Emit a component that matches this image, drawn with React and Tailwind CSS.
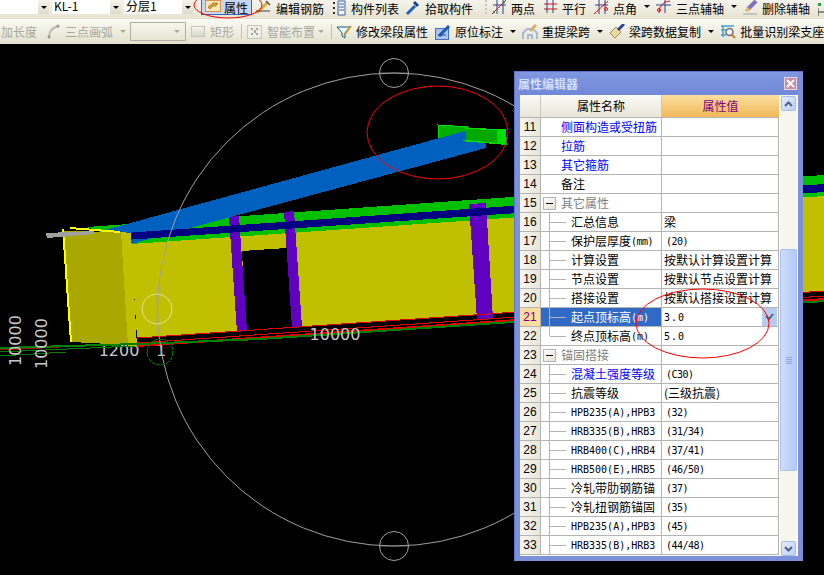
const cjk = { fontFamily: '"Noto Sans CJK SC", "Liberation Sans", sans-serif' };

const Arrow = ({ className = "", color = "border-t-black" }) => (
  <span className={`w-0 h-0 border-x-[3px] border-x-transparent border-t-[3px] shrink-0 ${color} ${className}`} />
);

const Ico = ({ w = 16, children }) => (
  <svg width={w} height="16" viewBox={`0 0 ${w} 16`} className="shrink-0">
    {children}
  </svg>
);

const Tool = ({ icon, label, className = "", gap = "gap-[4px]", muted }) => (
  <div className={`flex items-center shrink-0 whitespace-nowrap ${gap} ${className} ${muted ? "text-[#a8a89c]" : "text-black"}`}>
    {icon}
    <span>{label}</span>
  </div>
);

const Pencil = () => (
  <Ico w={15}>
    <path d="M1 13 L12 2" stroke="#d8b040" strokeWidth="3" />
    <path d="M10 1 L14 5" stroke="#505050" strokeWidth="1.5" />
    <path d="M0 11 H14" stroke="#404040" strokeWidth="1" />
  </Ico>
);
const ListIcon = () => (
  <Ico w={14}>
    <path d="M6 1 H13 V15 H6 Z" fill="#f4f8ff" stroke="#3c5c9c" />
    <path d="M7 4 H12 M7 7 H12 M7 10 H12" stroke="#3c5c9c" />
    <path d="M1 3 H3 M1 8 H3 M1 13 H3" stroke="#303030" strokeWidth="2" />
  </Ico>
);
const Picker = () => (
  <Ico w={14}>
    <path d="M1 14 L9 6" stroke="#2060c0" strokeWidth="3" />
    <path d="M8 2 L12 6" stroke="#104090" strokeWidth="3" />
  </Ico>
);
const Axis = ({ children }) => (
  <Ico w={15}>
    <path d="M1 5 H14 M5 0 V14 M11 0 V14" stroke="#30408c" />
    {children}
  </Ico>
);
const TwoPoint = () => (
  <Axis>
    <path d="M0 14 L14 0" stroke="#e01010" />
    <circle cx="2" cy="12" r="1" fill="#208020" />
    <circle cx="12" cy="2" r="1" fill="#208020" />
  </Axis>
);
const Parallel = () => (
  <Ico w={15}>
    <path d="M1 4 H14 M1 9 H14" stroke="#e01010" />
    <path d="M4 0 V13 M10 0 V13" stroke="#30408c" />
  </Ico>
);
const Angle = () => (
  <Axis>
    <path d="M0 14 L14 1" stroke="#e01010" />
    <circle cx="12" cy="9" r="1.5" fill="none" stroke="#e01010" />
  </Axis>
);
const Arc3 = () => (
  <Ico>
    <path d="M3 13 A11 11 0 0 1 14 1" stroke="#e01010" fill="none" />
    <path d="M0 5 H15 M9 0 V13" stroke="#30408c" />
    <circle cx="3" cy="10" r="1.5" fill="none" stroke="#e01010" />
  </Ico>
);
const Eraser = () => (
  <Ico w={15}>
    <path d="M5 9 L13 1" stroke="#8070c0" strokeWidth="4" />
    <path d="M3 11 L6 8" stroke="#e8b050" strokeWidth="3" />
    <path d="M0 14 H14" stroke="#a0a0a0" />
  </Ico>
);
const Prop = () => (
  <Ico>
    <rect x="0.5" y="1.5" width="15" height="11" fill="#fbe6b4" stroke="#d89048" />
    <path d="M3 8 L8 4 H13 L11 7 H8 L5 10 Z" fill="#d8a030" stroke="#705020" strokeWidth="0.5" />
  </Ico>
);
const ArcTool = () => (
  <Ico w={13}>
    <path d="M2 14 C2 7 6 3 12 2" stroke="#b8b8b0" strokeWidth="2" fill="none" />
    <circle cx="2" cy="13" r="1.5" fill="#989890" />
    <circle cx="11" cy="2" r="1.5" fill="#989890" />
  </Ico>
);
const Rect = () => (
  <span className="w-[14px] h-[11px] shrink-0 border border-[#c4c4b8] bg-gradient-to-b from-[#f4f4ee] to-[#d8d8cc]" />
);
const Smart = () => (
  <Ico w={15}>
    <rect x="0.5" y="1.5" width="14" height="13" fill="#eeeee4" stroke="#b4b4a8" strokeDasharray="2 1" />
    <path d="M4 5 h2 M9 5 h2 M4 10 h2 M9 10 h2 M7 7 h1 v2" stroke="#909088" strokeWidth="1.5" />
  </Ico>
);
const Funnel = () => (
  <Ico>
    <path d="M1 3 H14 L9 9 V14 L6 12 V9 Z" fill="#e8f8f8" stroke="#106080" />
    <path d="M8 11 L15 2" stroke="#c89030" strokeWidth="2" />
  </Ico>
);
const Mark = () => (
  <Ico>
    <rect x="0.5" y="4.5" width="13" height="11" fill="#a8c4ec" stroke="#4070c0" />
    <path d="M4 12 L14 2" stroke="#2058b8" strokeWidth="3" />
    <path d="M3 11 H11" stroke="#204890" />
  </Ico>
);
const Refetch = () => (
  <Ico>
    <path d="M1 15 V9 L5 5 H11 L15 9 V15" fill="none" stroke="#a8b8d8" strokeWidth="2" />
    <path d="M6 15 V11 H10 V15" fill="none" stroke="#a8b8d8" strokeWidth="2" />
    <path d="M8 7 L14 1" stroke="#d8b070" strokeWidth="3" />
  </Ico>
);
const Brush = () => (
  <Ico>
    <path d="M1 9 L7 3 L12 8 L6 14 Z" fill="#e8dca0" stroke="#a09050" />
    <path d="M9 6 L15 0" stroke="#3040a0" strokeWidth="3" />
  </Ico>
);
const Batch = () => (
  <Ico>
    <path d="M1 2 H14 M1 6 H8 M3 2 V13 M1 11 H6" stroke="#40a0d8" strokeWidth="1.5" fill="none" />
    <circle cx="9.5" cy="8" r="3.5" fill="#f0f4f8" stroke="#707070" strokeWidth="1.5" />
    <path d="M12 11 L15 14" stroke="#d87020" strokeWidth="2" />
  </Ico>
);
const Corner = () => (
  <Ico w={7}>
    <rect x="0" y="1" width="3" height="3" fill="#20a040" />
    <path d="M0 6 V14 M0 10 H6" stroke="#303030" />
  </Ico>
);

const Combo = ({ w, text }) => (
  <div className="flex h-[14px] shrink-0">
    <div className={`bg-white pl-[2px] leading-[11px] overflow-hidden ${w}`}>{text}</div>
    <div className="w-[11px] bg-gradient-to-b from-[#f4f3ea] to-[#dedccb] flex items-center justify-center">
      <Arrow />
    </div>
  </div>
);

const Toolbars = () => (
  <div className="shrink-0 text-[12px] leading-[11px]" style={cjk}>
    <div className="h-[19px] flex items-start overflow-hidden bg-gradient-to-b from-[#f5f4ec] to-[#e6e3d2]">
      <Combo w="w-[38px]" />
      <div className="ml-[3px]"><Combo w="w-[58px]" text="KL-1" /></div>
      <div className="ml-[3px]"><Combo w="w-[58px]" text="分层1" /></div>
      <div className="ml-[8px] w-[51px] h-[15px] pl-[3px] flex items-center gap-[3px] border-x border-b border-[#316ac5] bg-[#c8d6ee] shrink-0">
        <Prop />
        <span>属性</span>
      </div>
      <Tool className="ml-[4px]" gap="gap-[5px]" icon={<Pencil />} label="编辑钢筋" />
      <Tool className="ml-[8px]" gap="gap-[5px]" icon={<ListIcon />} label="构件列表" />
      <Tool className="ml-[7px]" gap="gap-[5px]" icon={<Picker />} label="拾取构件" />
      <div className="ml-[12px] w-[2px] h-[14px] shrink-0 border-l-2 border-dotted border-[#c8c4b0]" />
      <Tool className="ml-[5px]" icon={<TwoPoint />} label="两点" />
      <Tool className="ml-[8px]" icon={<Parallel />} label="平行" />
      <Tool className="ml-[8px]" icon={<Angle />} label="点角" />
      <Arrow className="ml-[7px] mt-[5px]" />
      <Tool className="ml-[6px]" icon={<Arc3 />} label="三点辅轴" />
      <Arrow className="ml-[7px] mt-[5px]" />
      <Tool className="ml-[6px]" icon={<Eraser />} label="删除辅轴" />
      <div className="ml-[8px] mt-[2px]"><Corner /></div>
    </div>
    <div className="h-[25px] flex items-center overflow-hidden bg-gradient-to-b from-[#fbfaf4] to-[#e4e1ce] leading-[12px]">
      <span className="ml-[1px] text-[#a8a89c] whitespace-nowrap shrink-0">加长度</span>
      <Tool muted className="ml-[10px]" gap="gap-[5px]" icon={<ArcTool />} label="三点画弧" />
      <Arrow className="ml-[7px]" color="border-t-[#a8a89c]" />
      <div className="ml-[4px] w-[56px] h-[19px] shrink-0 border border-[#b0b0a4] flex items-center justify-end pr-[5px]">
        <Arrow color="border-t-[#a8a89c]" />
      </div>
      <Tool muted className="ml-[5px]" gap="gap-[5px]" icon={<Rect />} label="矩形" />
      <div className="ml-[7px] w-px h-[15px] bg-[#c4c0ac] shrink-0" />
      <Tool muted className="ml-[5px]" gap="gap-[5px]" icon={<Smart />} label="智能布置" />
      <Arrow className="ml-[3px]" color="border-t-[#a8a89c]" />
      <div className="ml-[7px] w-px h-[15px] bg-[#c4c0ac] shrink-0" />
      <Tool className="ml-[4px]" icon={<Funnel />} label="修改梁段属性" />
      <Tool className="ml-[7px]" icon={<Mark />} label="原位标注" />
      <Arrow className="ml-[7px]" />
      <Tool className="ml-[6px]" icon={<Refetch />} label="重提梁跨" />
      <Arrow className="ml-[7px]" />
      <Tool className="ml-[6px]" icon={<Brush />} label="梁跨数据复制" />
      <Arrow className="ml-[7px]" />
      <Tool className="ml-[6px]" icon={<Batch />} label="批量识别梁支座" />
    </div>
  </div>
);

const Scene = () => (
  <svg className="block w-full h-full" viewBox="0 44 824 531" shapeRendering="crispEdges">
    {/* green band + beam end */}
    <polygon points="87,227 824,175 824,196 131,244" fill="#00c000" />
    <polygon points="438,125 468,127 468,132 439,140" fill="#00b000" stroke="#00e000" />
    <polygon points="105,230 465,131 486,144 486,148 131,244" fill="#0060c0" />
    <polygon points="466,128 506,129 507,145 460,141 466,140" fill="#00e000" />
    <polygon points="466,129 497,130 497,143 466,140" fill="#00a800" />
    {/* wall */}
    <polygon points="131,244 824,196 824,291 137,338" fill="#c0c000" />
    <polygon points="242,251 287,248 292,328 246,332" fill="#000000" />
    <polygon points="229,217 239,216 247,331 237,332" fill="#6000c0" />
    <polygon points="284,212 294,211 302,327 292,328" fill="#6000c0" />
    <polygon points="469,204 486,203 493,319 477,320" fill="#6000c0" />
    <polygon points="125,233 824,184 824,192 125,240" fill="#000080" />
    <g fill="#c8c8c8" fontFamily='"DejaVu Sans", sans-serif' fontSize="16" shapeRendering="auto">
      <text x="119" y="356" textAnchor="middle">1200</text>
      <text x="161" y="356" textAnchor="middle">1</text>
    </g>
    {/* end block */}
    <polygon points="64,231 121,232 128,345 72,342" fill="#a8a800" />
    <polygon points="121,232 131,233 137,347 128,346" fill="#c0c000" />
    <path d="M63 229 L71 342" stroke="#ffff00" strokeWidth="2" fill="none" />
    <path d="M70 228 L120 232" stroke="#ffff00" strokeWidth="2" fill="none" />
    <polygon points="46,233 94,231 94,234 47,238" fill="#a0a0a0" />
    {/* ground lines */}
    <g fill="none" strokeWidth="1">
      <path d="M137 338 L824 291" stroke="#e00000" />
      <path d="M137 343 L824 296" stroke="#e00000" />
      <path d="M137 346 L824 299" stroke="#e00000" strokeWidth="2" />
      <path d="M0 350 L100 345" stroke="#a01010" />
      <path d="M0 348 L137 344 L260 339 L824 301" stroke="#008000" strokeWidth="2" />
      <path d="M0 352 L135 346" stroke="#008000" />
      <path d="M0 356 L66 352" stroke="#008000" />
    </g>
    {/* axis circles */}
    <g fill="none" stroke="#a0a0a0" shapeRendering="auto">
      <circle cx="394" cy="309.5" r="236.5" />
      <circle cx="394" cy="73" r="14.5" />
      <circle cx="394" cy="546" r="14.5" />
      <circle cx="157" cy="309" r="15" stroke="#e0e0a0" />
      <path d="M379 73 H408 M379 546 H408 M157 294 V324" strokeWidth="0.6" />
    </g>
    <circle cx="160" cy="352" r="13" fill="none" stroke="#007000" strokeDasharray="4 1" />
    <g fill="#c8c8c8" fontFamily='"DejaVu Sans", sans-serif' fontSize="16" shapeRendering="auto">
      <text x="335" y="340" textAnchor="middle">10000</text>
      <text transform="translate(21 366) rotate(-90)">10000</text>
      <text transform="translate(47 369) rotate(-90)">10000</text>
    </g>
  </svg>
);

const rows = [
  { n: 11, name: "侧面构造或受扭筋", blue: true },
  { n: 12, name: "拉筋", blue: true },
  { n: 13, name: "其它箍筋", blue: true },
  { n: 14, name: "备注" },
  { n: 15, name: "其它属性", group: true },
  { n: 16, name: "汇总信息", child: true, value: "梁" },
  { n: 17, name: "保护层厚度", unit: "(mm)", child: true, value: "(20)" },
  { n: 18, name: "计算设置", child: true, value: "按默认计算设置计算" },
  { n: 19, name: "节点设置", child: true, value: "按默认节点设置计算" },
  { n: 20, name: "搭接设置", child: true, value: "按默认搭接设置计算" },
  { n: 21, name: "起点顶标高", unit: "(m)", child: true, value: "3.0", active: true },
  { n: 22, name: "终点顶标高", unit: "(m)", child: true, value: "5.0", last: true },
  { n: 23, name: "锚固搭接", group: true },
  { n: 24, name: "混凝土强度等级", child: true, blue: true, value: "(C30)" },
  { n: 25, name: "抗震等级", child: true, value: "(三级抗震)" },
  { n: 26, name: "HPB235(A),HPB3", child: true, value: "(32)" },
  { n: 27, name: "HRB335(B),HRB3", child: true, value: "(31/34)" },
  { n: 28, name: "HRB400(C),HRB4", child: true, value: "(37/41)" },
  { n: 29, name: "HRB500(E),HRB5", child: true, value: "(46/50)" },
  { n: 30, name: "冷轧带肋钢筋锚", child: true, value: "(37)" },
  { n: 31, name: "冷轧扭钢筋锚固", child: true, value: "(35)" },
  { n: 32, name: "HPB235(A),HPB3", child: true, value: "(45)" },
  { n: 33, name: "HRB335(B),HRB3", child: true, value: "(44/48)" },
];

const mono = { fontFamily: '"DejaVu Sans Mono", "Noto Sans CJK SC", monospace' };

const Row = ({ r }) => {
  const ascii = /^[\x00-\x7f]+$/;
  const isPlain = r.value === "3.0" || r.value === "5.0";
  const nameColor = r.active ? "text-white" : r.blue ? "text-[#0000ff]" : r.group ? "text-[#808080]" : "text-black";
  return (
    <div className="grid grid-cols-[21px_121px_117px] h-[19px] border-b border-[#b4b4b4]">
      <div
        className={`flex items-center justify-center border-r border-[#b4b4b4] text-[12px] ${
          r.active ? "bg-[#fbdca0] text-[#800080]" : "bg-gradient-to-r from-[#f8f7f0] to-[#e8e6d8] text-black"
        }`}
        style={{ fontFamily: '"Liberation Sans", sans-serif' }}
      >
        {r.n}
      </div>
      <div className={`flex items-center border-r border-[#b4b4b4] overflow-hidden ${r.active ? "bg-[#316ac5]" : ""}`}>
        {r.child && (
          <>
            <div className={`ml-[8px] w-px bg-[#b4b4b4] shrink-0 ${r.last ? "h-1/2 self-start" : "h-full"}`} />
            <div className="w-[16px] h-px bg-[#b4b4b4] shrink-0" />
            <div className="w-[5px] shrink-0" />
          </>
        )}
        {r.group && (
          <div className="ml-[2px] mr-[5px] w-[13px] h-[13px] flex items-center justify-center border border-[#b4b4b4] bg-gradient-to-br from-white to-[#e4e2d4] shrink-0">
            <div className="w-[7px] h-px bg-black" />
          </div>
        )}
        {!r.child && !r.group && <div className="w-[20px] shrink-0" />}
        <span
          className={`whitespace-nowrap ${nameColor} ${ascii.test(r.name) ? "text-[10px]" : "text-[12px]"}`}
          style={ascii.test(r.name) ? mono : cjk}
        >
          {r.name}
        </span>
        {r.unit && (
          <span className={`whitespace-nowrap text-[10px] ${r.unit === "(mm)" ? "tracking-[-0.5px]" : ""} ${nameColor}`} style={mono}>
            {r.unit}
          </span>
        )}
      </div>
      <div className="flex items-center border-r border-[#b4b4b4] pl-[2px] relative overflow-hidden">
        {r.value && (
          <span
            className={`whitespace-nowrap ${
              isPlain
                ? "text-[10px] tracking-[1px]"
                : ascii.test(r.value)
                  ? "text-[10px] ml-[2px] tracking-[-0.5px]"
                  : "text-[12px]"
            }`}
            style={ascii.test(r.value) ? mono : cjk}
          >
            {r.value}
          </span>
        )}
        {r.active && (
          <div className="absolute right-[1px] top-0 w-[15px] h-[18px] bg-[#b8ccf0] flex items-center justify-center">
            <svg width="9" height="8" viewBox="0 0 9 8">
              <path d="M1 3 L4 6 L8 1" stroke="#4d6185" strokeWidth="2" fill="none" />
            </svg>
          </div>
        )}
      </div>
    </div>
  );
};

const ScrollBtn = ({ d }) => (
  <div className="h-[15px] w-[15px] mx-auto shrink-0 rounded-[2px] border border-[#a8bce8] bg-gradient-to-br from-[#e4ecfc] to-[#bcd0f6] flex items-center justify-center">
    <svg width="9" height="6" viewBox="0 0 9 6">
      <path d={d} stroke="#4d6185" strokeWidth="2" fill="none" />
    </svg>
  </div>
);

const Scrollbar = () => (
  <div className="w-[17px] ml-px flex flex-col pt-px bg-[#f6f5ee]">
    <ScrollBtn d="M1 5 L4.5 1.5 L8 5" />
    <div className="h-[138px] shrink-0" />
    <div className="h-[222px] shrink-0 rounded-[2px] border border-[#a8c0f0] bg-gradient-to-r from-[#d0dcfa] to-[#b4caf8] flex flex-col items-center justify-center gap-px">
      <div className="w-[6px] h-px bg-[#8aa4e0]" />
      <div className="w-[6px] h-px bg-[#8aa4e0]" />
      <div className="w-[6px] h-px bg-[#8aa4e0]" />
      <div className="w-[6px] h-px bg-[#8aa4e0]" />
    </div>
    <div className="flex-1" />
    <ScrollBtn d="M1 1 L4.5 4.5 L8 1" />
  </div>
);

const Dialog = () => (
  <div className="absolute left-[514px] top-[27px] w-[289px] h-[490px] bg-[#7c90dc] border-l border-t border-[#5c74d0] flex flex-col pl-[5px] pr-[5px]" style={cjk}>
    <div className="h-[23px] shrink-0 flex items-center justify-between pr-[1px] bg-gradient-to-b from-[#8098e0] to-[#7088d8]">
      <span className="-ml-[2px] text-[12px] font-bold text-[#d4def6]">属性编辑器</span>
      <div className="w-[13px] h-[13px] flex items-center justify-center bg-[#c88ca8] border border-[#e8d8e0]">
        <svg width="9" height="9" viewBox="0 0 9 9">
          <path d="M1 1 L8 8 M8 1 L1 8" stroke="#ffffff" strokeWidth="2" />
        </svg>
      </div>
    </div>
    <div className="h-[461px] shrink-0 bg-white flex pr-[1px]">
      <div className="flex flex-col w-[259px] shrink-0 text-black">
        <div className="grid grid-cols-[21px_121px_117px] h-[23px] border-b border-[#b4b4b4] text-[12px]">
          <div className="border-r border-[#c8c8c0] bg-gradient-to-b from-[#fbfbf6] to-[#e8e6d8]" />
          <div className="flex items-center justify-center border-r border-[#c8c8c0] bg-gradient-to-b from-[#fbfbf6] to-[#e8e6d8]">属性名称</div>
          <div className="flex items-center justify-center text-[#800080] bg-gradient-to-b from-[#fbdf9f] to-[#f0b858]">属性值</div>
        </div>
        {rows.map((r) => (
          <Row key={r.n} r={r} />
        ))}
      </div>
      <Scrollbar />
    </div>
  </div>
);

export default function App() {
  return (
    <div className="relative w-[824px] h-[575px] overflow-hidden flex flex-col bg-black">
      <Toolbars />
      <div className="relative flex-1 bg-black">
        <Scene />
        <Dialog />
      </div>
      {/* red hand-drawn ellipses on top of everything */}
      <svg className="absolute inset-0 pointer-events-none" width="824" height="575" fill="none" stroke="#ff0000">
        <ellipse cx="228" cy="5" rx="34" ry="13" />
        <ellipse cx="437.5" cy="132.5" rx="70.5" ry="46.5" />
        <ellipse cx="702.5" cy="323.5" rx="66.5" ry="34.5" />
      </svg>
    </div>
  );
}
